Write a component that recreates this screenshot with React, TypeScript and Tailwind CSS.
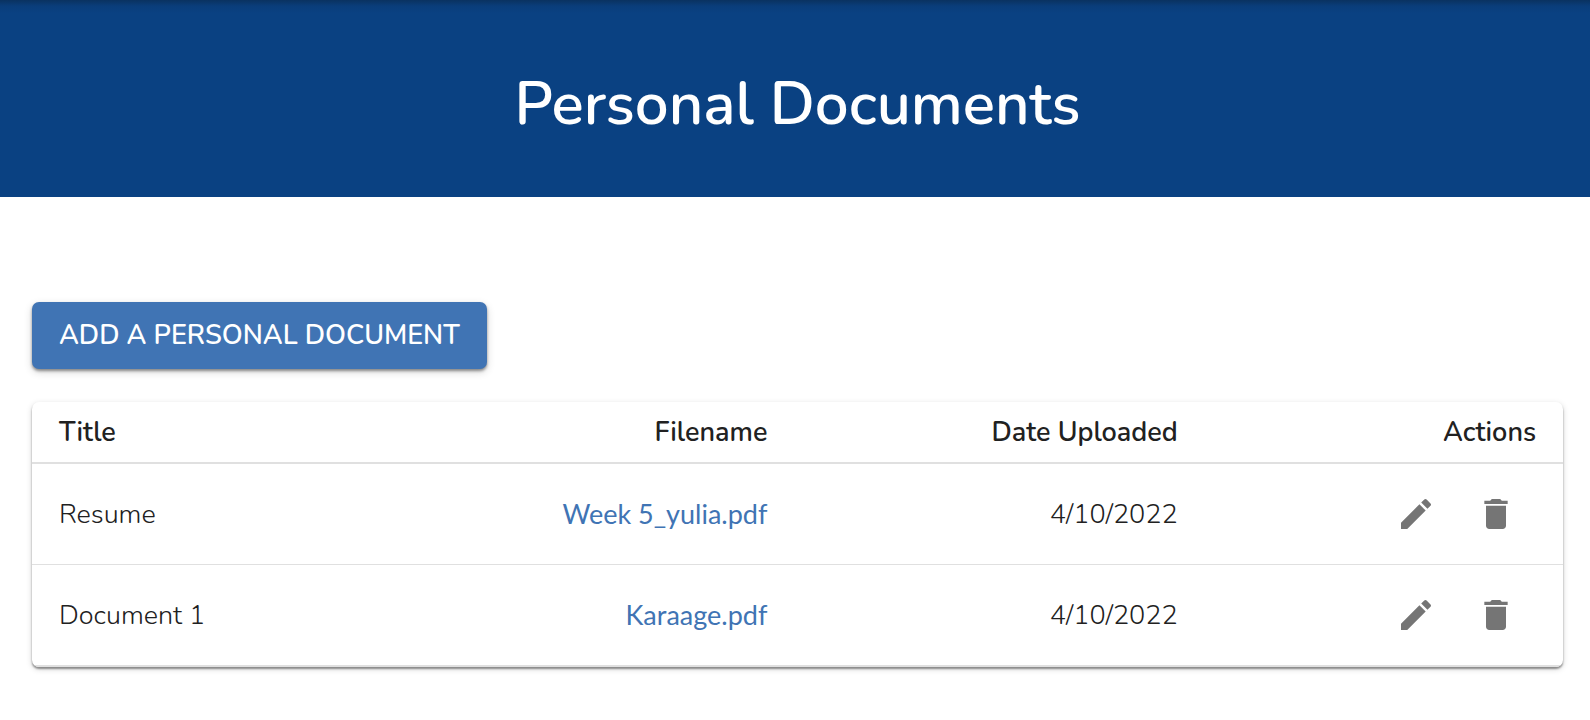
type PersonalDocument = {
  title: string;
  filename: string;
  uploaded: string;
};

const documents: PersonalDocument[] = [
  { title: "Resume", filename: "Week 5_yulia.pdf", uploaded: "4/10/2022" },
  { title: "Document 1", filename: "Karaage.pdf", uploaded: "4/10/2022" },
];

function EditIcon() {
  return (
    <svg viewBox="0 0 24 24" className="size-10 fill-current" aria-hidden="true">
      <path d="M3 17.25V21h3.75L17.81 9.94l-3.75-3.75L3 17.25zM20.71 7.04c.39-.39.39-1.02 0-1.41l-2.34-2.34a.9959.9959 0 0 0-1.41 0l-1.83 1.83 3.75 3.75 1.83-1.83z" />
    </svg>
  );
}

function DeleteIcon() {
  return (
    <svg viewBox="0 0 24 24" className="size-10 fill-current" aria-hidden="true">
      <path d="M6 19c0 1.1.9 2 2 2h8c1.1 0 2-.9 2-2V7H6v12zM19 4h-3.5l-1-1h-5l-1 1H5v2h14V4z" />
    </svg>
  );
}

function DocumentRow({ title, filename, uploaded }: PersonalDocument) {
  return (
    <tr className="border-b border-[#e0e0e0] font-light last:border-b-2">
      <td className="px-[27px] pt-3 pb-[10px]">{title}</td>
      <td className="px-[27px] pt-3 pb-[10px] text-right">
        <a href="#" className="font-['Lato',sans-serif] font-normal text-[#4074b4]">
          {filename}
        </a>
      </td>
      <td className="px-[27px] pt-3 pb-[10px] text-right">{uploaded}</td>
      <td className="px-[27px] py-[10px]">
        <div className="flex justify-end text-[#757575]">
          <button type="button" aria-label={`Edit ${title}`} className="rounded-full p-5">
            <EditIcon />
          </button>
          <button type="button" aria-label={`Delete ${title}`} className="rounded-full p-5">
            <DeleteIcon />
          </button>
        </div>
      </td>
    </tr>
  );
}

export default function App() {
  return (
    <div className="min-h-screen bg-white font-['Nunito','Lato',sans-serif] text-[27px] leading-[40px] text-[#212121]">
      <header className="bg-[#0a4182] bg-linear-to-b from-[#0a3260] via-[#0a3d7a] via-[6px] to-[#0a4182] to-[13px] pt-[68px] pr-[27px] pb-[57px] pl-8">
        <h1 className="text-center text-[60px] leading-[72px] font-semibold text-white">
          Personal Documents
        </h1>
      </header>
      <main className="pt-[105px] pr-[27px] pb-12 pl-8">
        <button
          type="button"
          className="rounded-[7px] bg-[#4074b4] px-[27px] py-[13px] leading-[41px] font-semibold text-white uppercase shadow-[0_2px_3px_rgba(0,0,0,0.4),0_3px_8px_rgba(0,0,0,0.16)]"
        >
          Add a personal document
        </button>
        <div className="mt-[33px] overflow-hidden rounded-[7px] bg-white shadow-[0_2px_2px_rgba(0,0,0,0.4),0_2px_6px_rgba(0,0,0,0.16)]">
          <table className="w-full table-fixed border-collapse">
            <colgroup>
              <col className="w-[24%]" />
              <col className="w-[25.8%]" />
              <col className="w-[26.8%]" />
              <col className="w-[23.4%]" />
            </colgroup>
            <thead>
              <tr className="border-b-2 border-[#e0e0e0] text-right">
                <th className="px-[27px] pt-[11px] pb-[9px] text-left font-semibold">Title</th>
                <th className="px-[27px] pt-[11px] pb-[9px] font-semibold">Filename</th>
                <th className="px-[27px] pt-[11px] pb-[9px] font-semibold">Date Uploaded</th>
                <th className="px-[27px] pt-[11px] pb-[9px] font-semibold">Actions</th>
              </tr>
            </thead>
            <tbody>
              {documents.map((doc) => (
                <DocumentRow key={doc.filename} {...doc} />
              ))}
            </tbody>
          </table>
        </div>
      </main>
    </div>
  );
}
